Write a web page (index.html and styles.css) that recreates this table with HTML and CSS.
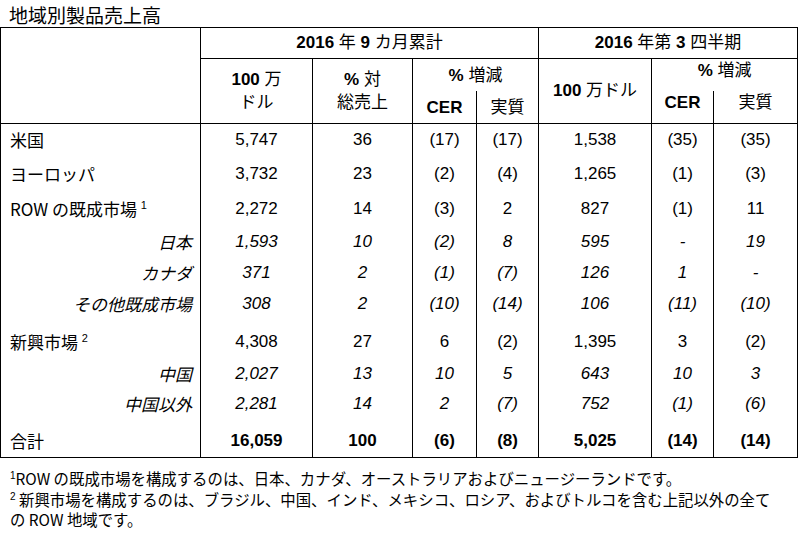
FILE: index.html
```html
<!DOCTYPE html>
<html lang="ja">
<head>
<meta charset="utf-8">
<title>地域別製品売上高</title>
<link rel="stylesheet" href="styles.css">
</head>
<body>
<h1 class="title">地域別製品売上高</h1>
<table class="sales">
  <colgroup>
    <col class="c-label">
    <col class="c-amt">
    <col class="c-pct">
    <col class="c-cer">
    <col class="c-real">
    <col class="c-amt2">
    <col class="c-cer2">
    <col class="c-real2">
  </colgroup>
  <thead>
    <tr class="hr1">
      <th class="corner" rowspan="3"></th>
      <th class="period" colspan="4"><b>2016</b> 年 <b>9</b> カ月累計</th>
      <th class="period" colspan="3"><b>2016</b> 年第 <b>3</b> 四半期</th>
    </tr>
    <tr class="hr2">
      <th class="two" rowspan="2"><b>100</b> 万<br>ドル</th>
      <th class="two" rowspan="2"><b>%</b> 対<br>総売上</th>
      <th class="grp g1" colspan="2"><b>%</b> 増減</th>
      <th class="mid" rowspan="2"><b>100</b> 万ドル</th>
      <th class="grp g2" colspan="2"><b>%</b> 増減</th>
    </tr>
    <tr class="hr3">
      <th class="sub g1"><b>CER</b></th>
      <th class="sub g1">実質</th>
      <th class="sub g2"><b>CER</b></th>
      <th class="sub g2">実質</th>
    </tr>
  </thead>
  <tbody>
    <tr class="rA">
      <td class="lbl">米国</td><td>5,747</td><td>36</td><td>(17)</td><td>(17)</td><td>1,538</td><td>(35)</td><td>(35)</td>
    </tr>
    <tr class="rA">
      <td class="lbl">ヨーロッパ</td><td>3,732</td><td>23</td><td>(2)</td><td>(4)</td><td>1,265</td><td>(1)</td><td>(3)</td>
    </tr>
    <tr class="rB">
      <td class="lbl">ROW の既成市場 <sup>1</sup></td><td>2,272</td><td>14</td><td>(3)</td><td>2</td><td>827</td><td>(1)</td><td>11</td>
    </tr>
    <tr class="rC it">
      <td class="lbl sub">日本</td><td>1,593</td><td>10</td><td>(2)</td><td>8</td><td>595</td><td>-</td><td>19</td>
    </tr>
    <tr class="rC it">
      <td class="lbl sub">カナダ</td><td>371</td><td>2</td><td>(1)</td><td>(7)</td><td>126</td><td>1</td><td>-</td>
    </tr>
    <tr class="rC it">
      <td class="lbl sub">その他既成市場</td><td>308</td><td>2</td><td>(10)</td><td>(14)</td><td>106</td><td>(11)</td><td>(10)</td>
    </tr>
    <tr class="rD">
      <td class="lbl">新興市場 <sup>2</sup></td><td>4,308</td><td>27</td><td>6</td><td>(2)</td><td>1,395</td><td>3</td><td>(2)</td>
    </tr>
    <tr class="rC it">
      <td class="lbl sub">中国</td><td>2,027</td><td>13</td><td>10</td><td>5</td><td>643</td><td>10</td><td>3</td>
    </tr>
    <tr class="rE it">
      <td class="lbl sub">中国以外</td><td>2,281</td><td>14</td><td>2</td><td>(7)</td><td>752</td><td>(1)</td><td>(6)</td>
    </tr>
    <tr class="rF tot">
      <td class="lbl">合計</td><td>16,059</td><td>100</td><td>(6)</td><td>(8)</td><td>5,025</td><td>(14)</td><td>(14)</td>
    </tr>
  </tbody>
</table>
<div class="notes">
  <p><sup>1</sup>ROW の既成市場を構成するのは、日本、カナダ、オーストラリアおよびニュージーランドです。</p>
  <p><sup>2</sup> 新興市場を構成するのは、ブラジル、中国、インド、メキシコ、ロシア、およびトルコを含む上記以外の全て<br>の ROW 地域です。</p>
</div>
</body>
</html>
```

FILE: styles.css
```css
html, body {
  margin: 0;
  padding: 0;
  background: #fff;
  color: #000;
}

body {
  font-family: "Liberation Sans", "Noto Sans CJK JP", sans-serif;
  width: 798px;
}

.title {
  margin: 0;
  padding: 2px 0 0 9px;
  height: 25px;
  font: 400 19px/25px "Noto Sans CJK JP", sans-serif;
}

.sales {
  border-collapse: collapse;
  table-layout: fixed;
  width: 797px;
}

.c-label { width: 200px; }
.c-amt { width: 112px; }
.c-pct { width: 100px; }
.c-cer { width: 64px; }
.c-real { width: 62px; }
.c-amt2 { width: 113px; }
.c-cer2 { width: 62px; }
.c-real2 { width: 84px; }

.sales th,
.sales td {
  padding: 0;
  border-left: 1px solid #000;
  border-right: 1px solid #000;
  text-align: center;
  white-space: nowrap;
}

.sales thead th {
  font-weight: 400;
  font-size: 17px;
  line-height: 20px;
  vertical-align: top;
}

.sales b {
  font-weight: 700;
}

.hr1 { height: 31px; }
.hr2 { height: 32px; }
.hr3 { height: 33px; }

.sales thead .corner {
  border-top: 1px solid #000;
  border-bottom: 1px solid #000;
}

.sales thead .period {
  border-top: 1px solid #000;
  border-bottom: 1px solid #000;
  line-height: 30px;
  vertical-align: middle;
}

.sales thead .two {
  vertical-align: middle;
  line-height: 23px;
  border-bottom: 1px solid #000;
}

.sales thead .mid {
  vertical-align: middle;
  padding-bottom: 1px;
  border-bottom: 1px solid #000;
}

.sales thead .grp.g1 { padding-top: 7px; }
.sales thead .grp.g2 { padding-top: 2px; }

.sales thead .sub {
  border-bottom: 1px solid #000;
}
.sales thead .sub.g1 { padding-top: 7px; }
.sales thead .sub.g2 { padding-top: 2px; }

.sales tbody td {
  font-size: 17px;
  line-height: 20px;
  vertical-align: top;
}

.sales tbody .lbl {
  text-align: left;
  padding-left: 9px;
  font-family: "Noto Sans CJK JP", sans-serif;
}

.sales tbody .lbl.sub {
  text-align: right;
  padding-left: 0;
  padding-right: 8px;
}

.sales sup {
  font-family: "Liberation Sans", sans-serif;
  font-size: 11px;
  line-height: 0;
  vertical-align: 7px;
}

.rA td { padding-top: 6px; padding-bottom: 8px; }
.rB td { padding-top: 7px; padding-bottom: 6px; }
.rC td { padding-top: 7px; padding-bottom: 4px; }
.rD td { padding-top: 14px; padding-bottom: 5px; }
.rE td { padding-top: 6px; padding-bottom: 5px; }
.rF td { padding-top: 12px; padding-bottom: 6px; border-bottom: 1px solid #000; }

.it td { font-style: italic; }

.tot td { font-weight: 700; }
.tot .lbl { font-weight: 400; }

.notes {
  margin-top: 10px;
  padding-left: 10px;
  font: 400 15.4px/20.5px "Noto Sans CJK JP", sans-serif;
  white-space: nowrap;
}

.notes p {
  margin: 0;
}

.notes sup {
  font-family: "Liberation Sans", sans-serif;
  font-size: 10px;
  line-height: 0;
  vertical-align: 6px;
}
```
